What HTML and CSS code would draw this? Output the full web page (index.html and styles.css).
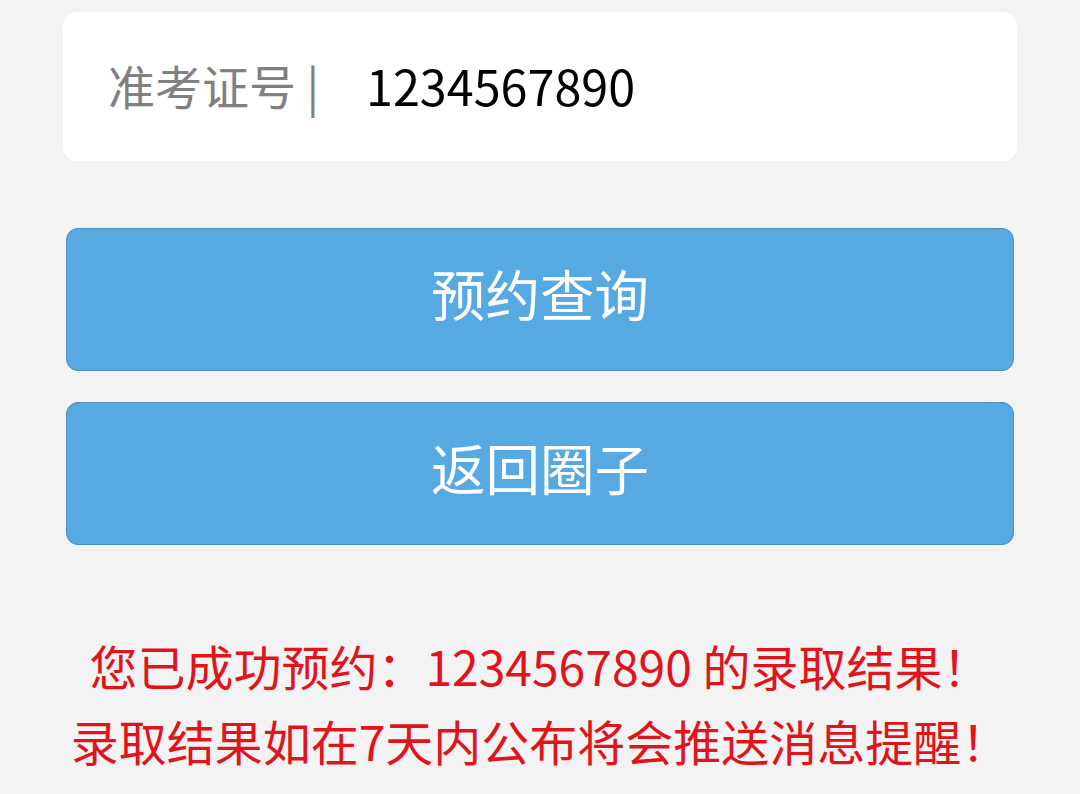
FILE: index.html
```html
<!DOCTYPE html>
<html lang="zh-CN">
<head>
  <meta charset="UTF-8" />
  <meta name="viewport" content="width=device-width, initial-scale=1.0"/>
  <title>预约查询</title>
  <link rel="stylesheet" href="styles.css">
</head>
<body>
  <div class="page">
    <div class="field-card">
      <span class="field-label">准考证号 |</span>
      <span class="field-value">1234567890</span>
    </div>

    <div class="actions">
      <button class="btn">预约查询</button>
      <button class="btn">返回圈子</button>
    </div>

    <div class="notice">
      <p>您已成功预约：1234567890 的录取结果！</p>
      <p>录取结果如在7天内公布将会推送消息提醒！</p>
    </div>
  </div>
</body>
</html>
```

FILE: styles.css
```css
* {
  box-sizing: border-box;
}

body {
  margin: 0;
  background-color: #f3f3f4;
  font-family: "Noto Sans CJK SC", "Noto Sans", sans-serif;
  height: 100vh;
  overflow: hidden;
}

.page {
  padding: 12px 63px 0;
}

.field-card {
  height: 149px;
  background: #ffffff;
  border-radius: 14px;
  display: flex;
  align-items: center;
  padding-left: 45px;
  padding-bottom: 4px;
}

.field-label {
  color: #808080;
  font-size: 47px;
  width: 258px;
}

.field-value {
  color: #000;
  font-size: 48.5px;
}

.actions {
  display: flex;
  flex-direction: column;
  gap: 31px;
  margin: 67px 3px 0;
}

.btn {
  height: 143px;
  background-color: #57a9e1;
  border: 1px solid #4b8dbf;
  border-radius: 12px;
  color: #fff;
  font-family: inherit;
  font-size: 54.5px;
  padding: 0 0 14px;
  cursor: pointer;
}

.notice {
  margin-top: 83px;
  text-align: center;
  color: #e0141a;
  font-size: 48px;
  line-height: 75px;
}

.notice p {
  margin: 0;
}
```
